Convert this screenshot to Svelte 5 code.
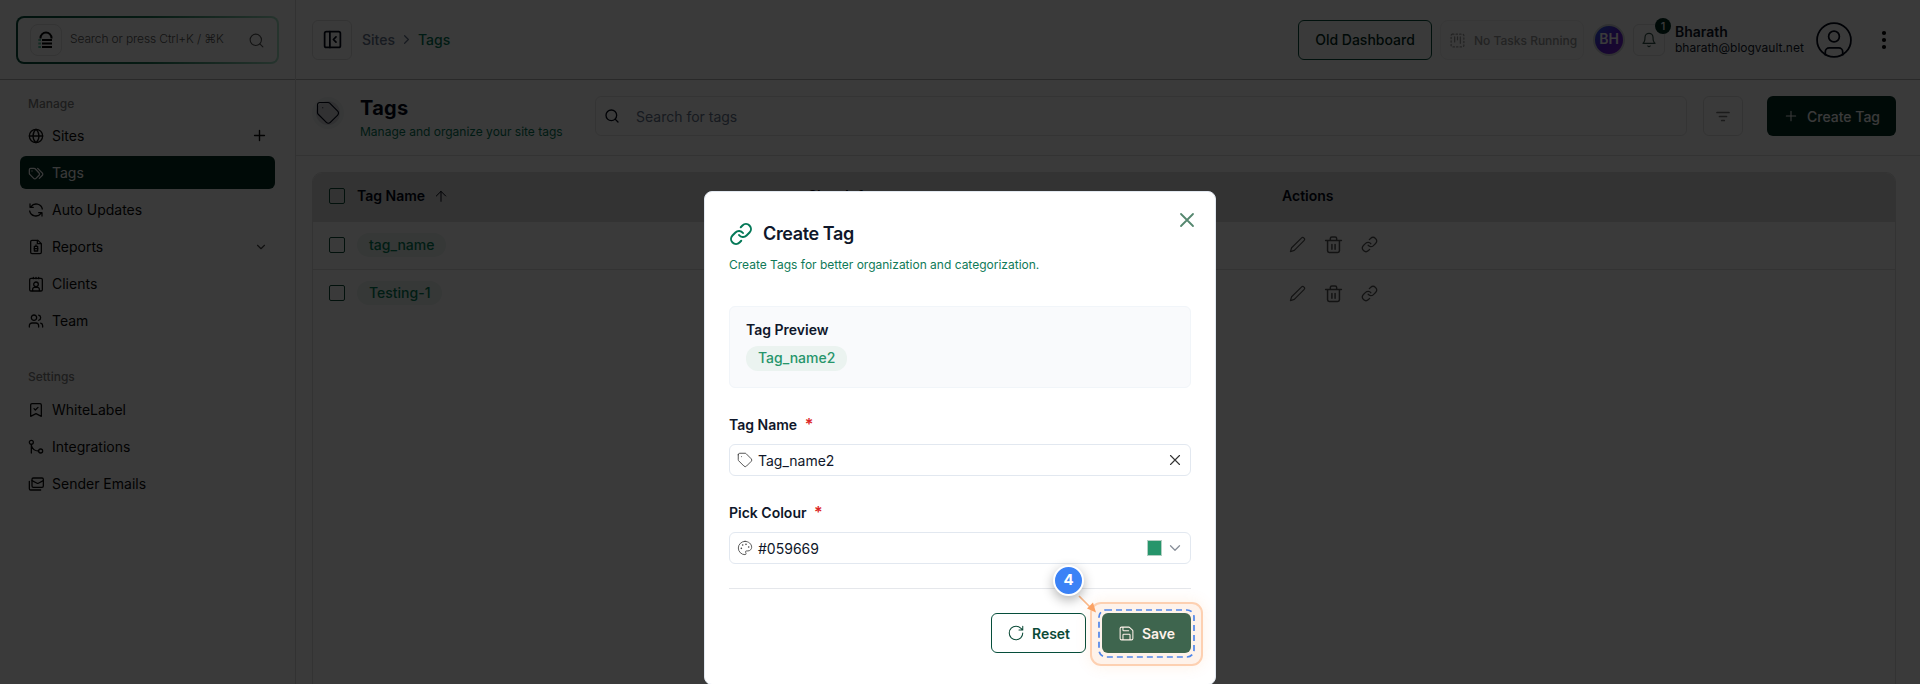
<script>
  const icons = {
    globe: '<circle cx="12" cy="12" r="10"/><path d="M2 12h20M12 2C8.500 5 7.500 8.500 7.500 12s1 7 4.500 10c3.500-3 4.500-6.500 4.500-10S15.500 5 12 2Z"/>',
    tags: '<path d="M2 7v5.500c0 .6.200 1.200.700 1.600l5.900 5.900a2.400 2.400 0 0 0 3.400 0l4.600-4.600a2.400 2.400 0 0 0 0-3.400L10.700 5.700A2.400 2.400 0 0 0 9.100 5H4a2 2 0 0 0-2 2Z"/><path d="m17 20 4.300-4.300a2.700 2.700 0 0 0 0-3.900L14.500 5M6 9h.01"/>',
    sync: '<path d="M21.500 10.500A9.500 9.500 0 0 0 4.500 7M3 3v5h5M2.500 13.500A9.500 9.500 0 0 0 19.500 17m1.500 4v-5h-5"/>',
    report: '<path d="M14 2v5h5"/><path d="M18 22H6a2 2 0 0 1-2-2V4a2 2 0 0 1 2-2h9l5 5v13a2 2 0 0 1-2 2Z"/><path d="M9.500 18v-7h5v7ZM9 14.500h6M12 9v2"/>',
    client: '<rect x="2.500" y="3.500" width="19" height="19" rx="2"/><path d="M8 2v2M12 2v2M16 2v2M7 22v-2a3 3 0 0 1 3-3h4a3 3 0 0 1 3 3v2"/><circle cx="12" cy="12.500" r="3.500"/>',
    team: '<path d="M16 21v-2a4 4 0 0 0-4-4H6a4 4 0 0 0-4 4v2M22 21v-2a4 4 0 0 0-3-3.870M16 3.130a4 4 0 0 1 0 7.750"/><circle cx="9" cy="7" r="4"/>',
    bookmark: '<path d="M20 21.500l-8-4-8 4V4.500a2 2 0 0 1 2-2h12a2 2 0 0 1 2 2ZM9 10l2 2 4-4"/>',
    branch: '<circle cx="5" cy="5" r="3"/><circle cx="19" cy="18" r="3"/><path d="M5 8v13M5 9c1 5.500 5 9 11 9"/>',
    mails: '<rect x="6" y="3" width="17" height="14" rx="2"/><path d="m23 7-7.500 3.800c-.6.300-1.300.3-1.900 0L6 7M2 8v11a2 2 0 0 0 2 2h15"/>',
    search: '<circle cx="11" cy="11" r="8"/><path d="m21 21-4.300-4.300"/>',
    plus: '<path d="M5 12h14M12 5v14"/>',
    down: '<path d="m6 9 6 6 6-6"/>',
    right: '<path d="m9 18 6-6-6-6"/>',
    up: '<path d="m5 12 7-7 7 7M12 20V5"/>',
    panel: '<rect x="3" y="3" width="18" height="18" rx="2"/><path d="M9 3v18M16 15l-3-3 3-3"/>',
    tag: '<path d="M3 5v6.600c0 .5.200 1.100.600 1.500l7 7a2.400 2.400 0 0 0 3.400 0l6.300-6.300a2.400 2.400 0 0 0 0-3.400l-6.800-6.800a2 2 0 0 0-1.400-.6H5a2 2 0 0 0-2 2ZM7.500 7.500h.01"/>',
    task: '<rect x="3" y="3" width="18" height="18" rx="2" stroke-dasharray="2 3"/><path d="M8 7v7M12 7v4M16 7v9"/>',
    bell: '<path d="M6 8a6 6 0 0 1 12 0c0 7 3 9 3 9H3s3-2 3-9M10.300 21a1.940 1.940 0 0 0 3.400 0"/>',
    user: '<circle cx="12" cy="12" r="10.700"/><circle cx="12" cy="9.800" r="3.400"/><path d="M6.500 21.300v-1.800a2.500 2.500 0 0 1 2.500-2.500h6a2.500 2.500 0 0 1 2.500 2.500v1.800"/>',
    pencil: '<path d="M17.500 2.900a2.600 2.600 0 0 1 3.700 3.700L7.500 20.300 2 22l1.700-5.400Z"/>',
    trash: '<path d="M2 7h20M4.500 7v13a2 2 0 0 0 2 2h11a2 2 0 0 0 2-2V7M8 7V4.500a2 2 0 0 1 2-2h4a2 2 0 0 1 2 2V7M10 12v6M14 12v6"/>',
    chain: '<path d="M10 13a5 5 0 0 0 7.540.540l3-3a5 5 0 0 0-7.070-7.070l-1.720 1.710"/><path d="M14 11a5 5 0 0 0-7.540-.540l-3 3a5 5 0 0 0 7.070 7.070l1.710-1.710"/>',
    x: '<path d="M18 6 6 18M6 6l12 12"/>',
    palette: '<path d="M12 2a10 10 0 0 0 0 20c.9 0 1.600-.7 1.600-1.700 0-.4-.2-.8-.4-1.100-.3-.3-.4-.7-.4-1.100a1.600 1.600 0 0 1 1.600-1.700h2c3 0 5.600-2.500 5.600-5.500C22 6 17.500 2 12 2Z"/><path d="M13.500 6.500h.01M17.500 10.500h.01M8.500 7.500h.01M6.500 12.500h.01" stroke-width="2.500"/>',
    reset: '<path d="M21 12a9 9 0 1 1-9-9c2.500 0 4.900 1 6.700 2.700L21 8M21 3v5h-5"/>',
    save: '<path d="M15.200 3a2 2 0 0 1 1.400.6l3.800 3.800a2 2 0 0 1 .6 1.400V19a2 2 0 0 1-2 2H5a2 2 0 0 1-2-2V5a2 2 0 0 1 2-2ZM17 21v-7a1 1 0 0 0-1-1H8a1 1 0 0 0-1 1v7M7 3v4a1 1 0 0 0 1 1h7"/>'
  };
  const groups = [
    { label: 'Manage', items: [
      { name: 'Sites', icon: 'globe', end: 'plus' },
      { name: 'Tags', icon: 'tags', active: true },
      { name: 'Auto Updates', icon: 'sync' },
      { name: 'Reports', icon: 'report', end: 'down' },
      { name: 'Clients', icon: 'client' },
      { name: 'Team', icon: 'team' }
    ] },
    { label: 'Settings', items: [
      { name: 'WhiteLabel', icon: 'bookmark' },
      { name: 'Integrations', icon: 'branch' },
      { name: 'Sender Emails', icon: 'mails' }
    ] }
  ];
  const rows = ['tag_name', 'Testing-1'];
</script>

{#snippet icon(name, size = 16, width = 2)}
  <svg class="icon" width={size} height={size} viewBox="0 0 24 24" fill="none" stroke="currentColor" stroke-width={width} stroke-linecap="round" stroke-linejoin="round">{@html icons[name]}</svg>
{/snippet}

<div class="app">
  <aside>
    <div class="brand">
      <div class="finder">
        <div class="logo">
          <svg width="16" height="18" viewBox="0 0 16 18">
            <path d="M2.500 7.500V7a5.500 5.500 0 0 1 11 0v.5" fill="none" stroke="#000" stroke-width="2" />
            <path d="M4 9h10M4 12.500h10M4 16h10" stroke="#000" stroke-width="2" />
            <path d="M.5 9h2.500M.5 12.500h2.500M.5 16h2.500" stroke="#18a878" stroke-width="2" stroke-dasharray="1.200 .6" />
          </svg>
        </div>
        <span>Search or press Ctrl+K / ⌘K</span>
        {@render icon('search', 17, 1.6)}
      </div>
    </div>
    {#each groups as group}
      <section class="group">
        <h2>{group.label}</h2>
        {#each group.items as item}
          <div class="item" class:active={item.active}>
            {@render icon(item.icon, 16, 1.9)}
            <span>{item.name}</span>
            {#if item.end}<i class:plus={item.end === 'plus'}>{@render icon(item.end, item.end === 'plus' ? 17 : 14, 2)}</i>{/if}
          </div>
        {/each}
      </section>
    {/each}
  </aside>

  <main>
    <header class="top">
      <button class="toggle">{@render icon('panel', 21, 2)}</button>
      <nav><span>Sites</span>{@render icon('right', 15, 2)}<b>Tags</b></nav>
      <button class="old">Old Dashboard</button>
      <div class="tasks">{@render icon('task', 17, 1.7)}<span>No Tasks Running</span></div>
      <div class="initials">BH</div>
      <button class="bell">{@render icon('bell', 16, 1.8)}<em>1</em></button>
      <div class="account"><b>Bharath</b><span>bharath@blogvault.net</span></div>
      <div class="avatar">{@render icon('user', 38, 1.1)}</div>
      <svg class="dots" width="6" height="20" viewBox="0 0 6 20"><circle cx="3" cy="3" r="2.100" /><circle cx="3" cy="10" r="2.100" /><circle cx="3" cy="17" r="2.100" /></svg>
    </header>

    <div class="heading">
      <div class="medal">{@render icon('tag', 28, 1)}</div>
      <div class="title"><h1>Tags</h1><p>Manage and organize your site tags</p></div>
      <div class="query">{@render icon('search', 16, 2)}<span>Search for tags</span></div>
      <button class="filter"><svg width="14" height="11" viewBox="0 0 14 11" stroke="currentColor" stroke-width="1.700" stroke-linecap="round"><path d="M1 1.500h12M3.500 5.500h7M5.700 9.500h2.600" /></svg></button>
      <button class="create">{@render icon('plus', 16, 1.6)}<span>Create Tag</span></button>
    </div>

    <div class="table">
      <div class="row head">
        <span class="box"></span>
        <div class="name"><b>Tag Name</b>{@render icon('up', 16, 1.5)}</div>
        <b class="info">Sites Info</b>
        <b class="acts">Actions</b>
      </div>
      {#each rows as row}
        <div class="row">
          <span class="box"></span>
          <div class="name"><span class="pill">{row}</span></div>
          <span class="info"></span>
          <div class="acts tools">{@render icon('pencil', 17, 1.7)}{@render icon('trash', 19, 1.9)}{@render icon('chain', 17, 1.8)}</div>
        </div>
      {/each}
    </div>
  </main>

  <div class="shade"></div>

  <div class="modal">
    <div class="mtitle">{@render icon('chain', 24, 2)}<h3>Create Tag</h3></div>
    <button class="close">{@render icon('x', 24, 1.8)}</button>
    <p class="desc">Create Tags for better organization and categorization.</p>
    <div class="preview"><b>Tag Preview</b><span class="pill">Tag_name2</span></div>
    <div class="label">Tag Name <em>*</em></div>
    <div class="input">{@render icon('tag', 18, 1.2)}<span>Tag_name2</span><i>{@render icon('x', 18, 1.5)}</i></div>
    <div class="label">Pick Colour <em>*</em></div>
    <div class="input pick">{@render icon('palette', 16, 1.3)}<span>#059669</span><u></u><i class="grey">{@render icon('down', 18, 1.7)}</i></div>
    <div class="foot">
      <button class="reset">{@render icon('reset', 18, 1.4)}<span>Reset</span></button>
      <button class="save">{@render icon('save', 17, 1.5)}<span>Save</span></button>
    </div>
  </div>

  <div class="halo"></div>
  <svg class="dash" width="98" height="50"><rect x="1" y="1" width="95" height="47" rx="7" fill="none" stroke="#4f86ea" stroke-width="1.700" stroke-dasharray="6 4" /></svg>
  <svg class="arrow" width="20" height="20" viewBox="0 0 20 20"><path d="M1 1l11 11" stroke="#fbb98a" stroke-width="1.700" /><path d="M18 17.500 9 13.500l6-6Z" fill="#fba264" /></svg>
  <div class="step">4</div>
</div>

<style>
  :global(body) { overflow: hidden; }
  * { box-sizing: border-box; }
  .app { position: relative; display: flex; width: 1920px; height: 684px; overflow: hidden; background: #fff; color: #020817; font: 400 14px/20px Inter, sans-serif; }
  button { padding: 0; font: inherit; background: none; border: 0; display: flex; align-items: center; justify-content: center; color: inherit; }
  h1, h2, h3, p { margin: 0; }
  em, i { font-style: normal; }
  .icon { flex: none; display: block; }
  b { font-weight: 600; }

  aside { width: 296px; border-right: 1px solid #dcdcdc; flex: none; }
  .brand { height: 80px; padding: 16px 16px 0; border-bottom: 1px solid #b4b4b4; }
  .finder { height: 48px; display: flex; align-items: center; padding: 0 12px; border: 2px solid transparent; border-radius: 8px; background: linear-gradient(#fff, #fff) padding-box, linear-gradient(90deg, #064e3b, #1c7555 50%, #a7e3c8) border-box; color: #555; font-size: 12px; font-weight: 300; letter-spacing: -.13px; }
  .finder span { flex: 1; margin: -3px 0 0 8px; white-space: nowrap; }
  .logo { width: 32px; height: 32px; border: 1px solid #e2e2e2; border-radius: 8px; display: flex; align-items: center; justify-content: center; }
  .group { padding: 14px 20px 0; height: 273px; }
  h2 { font-size: 12px; line-height: 20px; padding-left: 8px; margin-bottom: 6px; font-weight: 500; color: #808080; }
  .group:first-of-type h2 { margin-bottom: 5px; }
  .item { height: 33px; margin-bottom: 4px; display: flex; align-items: center; padding: 0 8px; border-radius: 6px; color: #0a0a0a; }
  .item span { flex: 1; margin-left: 8px; }
  .item i { width: 16px; display: flex; justify-content: center; color: #444; margin-right: -2px; }
  .item i.plus { color: #111; margin-right: 0; }
  .item.active { background: #022c22; color: #fff; }

  main { flex: 1; min-width: 0; }
  .top { height: 80px; display: flex; align-items: center; padding-left: 16px; border-bottom: 1px solid #b4b4b4; }
  .toggle { width: 40px; height: 40px; border: 1px solid #e0e0e0; border-radius: 6px; }
  nav { flex: 1; display: flex; align-items: center; gap: 4px; margin-left: 10px; font-weight: 500; color: #64748b; }
  nav b { color: #047857; font-weight: 500; }
  .old { width: 134px; height: 40px; border: 1px solid #064e3b; border-radius: 6px; font-weight: 500; color: #022c22; }
  .tasks { width: 144px; height: 40px; margin-left: 8px; display: flex; align-items: center; gap: 8px; padding: 2px 0 0 8px; border: 1px solid #efefef; border-radius: 8px; font-size: 12px; font-weight: 500; color: #999; white-space: nowrap; }
  .initials { width: 32px; height: 32px; margin-left: 9px; border: 2px solid #d1d5db; border-radius: 50%; background: linear-gradient(135deg, #2563eb, #5b21d6 50%, #7e22ce); color: #fff; display: flex; align-items: center; justify-content: center; font-weight: 600; padding-bottom: 2px; }
  .bell { position: relative; width: 32px; height: 32px; margin-left: 8px; border: 1px solid #e2e2e2; border-radius: 6px; color: #34544a; }
  .bell em { position: absolute; right: -7px; top: -7px; width: 16px; height: 16px; border-radius: 50%; background: #022c22; color: #fff; font: 500 11px/16px Inter, sans-serif; }
  .account { display: flex; flex-direction: column; margin: -2px 0 0 10px; width: 129px; font-size: 12px; line-height: 15px; color: #0f172a; }
  .account b { font-size: 14px; line-height: 17px; }
  .avatar { margin-left: 11px; width: 38px; }
  .dots { margin: 0 33px 0 28px; }

  .heading { height: 76px; display: flex; align-items: center; padding: 0 24px 3px 16px; border-bottom: 1px solid #dedede; }
  .medal { width: 32px; height: 32px; margin-top: -6px; border-radius: 50%; border: 4px solid #f2f3f4; background: #d5d5dd; display: flex; align-items: center; justify-content: center; }
  .title { width: 251px; padding: 3px 0 0 16px; }
  h1 { font-size: 20px; line-height: 28px; font-weight: 700; letter-spacing: .3px; margin-top: -2px; }
  .title p { font-size: 12px; line-height: 16px; color: #047857; margin-top: 2px; white-space: nowrap; }
  .query { flex: 1; height: 40px; border: 1px solid #e4e4e4; border-radius: 6px; display: flex; align-items: center; gap: 16px; padding: 0 8px; color: #020817; }
  .query span { color: #64748b; padding-top: 2px; }
  .filter { width: 40px; height: 40px; margin: 0 24px 0 16px; border: 1px solid #e0e0e0; border-radius: 6px; color: #777; }
  .create { width: 129px; height: 40px; gap: 8px; border-radius: 6px; background: #022c22; color: #fff; font-weight: 500; }
  .create span { padding-top: 2px; }

  .table { margin: 16px 24px 0 16px; height: 540px; border: 1px solid #dedede; border-radius: 10px; overflow: hidden; }
  .row { height: 48px; display: flex; align-items: center; padding: 0 0 2px 16px; }
  .head + .row { border-bottom: 1px solid #dedede; }
  .row.head { height: 49px; background: #e0e0e0; padding-bottom: 3px; }
  .box { width: 16px; height: 16px; border: 1px solid #0c4a37; border-radius: 2px; flex: none; }
  .name { width: 463px; padding-left: 12px; display: flex; align-items: center; gap: 8px; }
  .info { width: 474px; }
  .pill { display: inline-block; height: 24px; line-height: 23px; padding: 0 12px; border-radius: 12px; background: #ebf3f0; color: #059669; font-weight: 500; }
  .row .pill { color: #04805a; }
  .tools { display: flex; align-items: center; gap: 18px; padding-left: 7px; color: #555; }

  .shade { position: absolute; inset: 0; background: rgba(0, 0, 0, .773); }
  .modal { position: absolute; left: 704px; top: 191px; width: 512px; height: 494px; padding: 29px 24px 0; background: #fff; border: 1px solid #e2e8f0; border-radius: 8px; }
  .mtitle { display: flex; align-items: center; gap: 10px; height: 26px; color: #047857; }
  h3 { font-size: 18px; font-weight: 600; color: #0f172a; line-height: 26px; letter-spacing: -.38px; }
  .close { position: absolute; right: 16px; top: 16px; color: #55876f; }
  .desc { margin-top: 10px; font-size: 12px; line-height: 16px; color: #0f7a58; }
  .preview { margin-top: 33px; height: 82px; padding: 13px 16px; border: 1px solid #f1f5f9; border-radius: 6px; background: #f9fafc; display: flex; flex-direction: column; align-items: flex-start; gap: 6px; color: #0f172a; }
  .modal .pill { color: #26956b; height: 25px; line-height: 24px; }
  .label { margin-top: 26px; height: 20px; font-weight: 600; color: #0f172a; }
  .label em { color: #dc2626; margin-left: 4px; font-size: 16px; }
  .input { margin-top: 10px; height: 32px; border: 1px solid #e2e8f0; border-radius: 6px; display: flex; align-items: center; padding: 0 6px; color: #444; }
  .input span { flex: 1; margin-left: 4px; padding-top: 1px; color: #0f172a; }
  .input i { color: #333; }
  .input i.grey { color: #888f99; }
  .pick { padding-left: 7px; }
  .pick span { margin-left: 5px; }
  .input u { width: 15px; height: 16px; background: #26956b; border: 1px solid #b3cfc3; margin-right: 4px; }
  .foot { margin-top: 24px; padding-top: 24px; border-top: 1px solid #e5e7eb; display: flex; justify-content: flex-end; gap: 16px; }
  .foot button { height: 40px; border-radius: 6px; font-weight: 600; gap: 7px; }
  .foot span { padding-top: 1px; }
  .reset { width: 95px; border: 1px solid #064e3b; color: #0b4a37; }
  .foot .save { width: 89px; background: #2d6554; color: #fff; }
  .halo { position: absolute; left: 1090px; top: 602px; width: 113px; height: 64px; border: 2px solid #fdd0b1; border-radius: 11px; background: rgba(249, 115, 22, .09); box-shadow: 0 0 16px rgba(249, 115, 22, .1); }
  .dash { position: absolute; left: 1098px; top: 609px; }
  .arrow { position: absolute; left: 1078px; top: 595px; }
  .step { position: absolute; left: 1053px; top: 565px; width: 31px; height: 31px; border: 2px solid #fff; border-radius: 50%; background: #3b82f6; color: #fff; text-align: center; font: 700 15px/25px Inter, sans-serif; box-shadow: 0 4px 12px rgba(0, 0, 0, .3); }
</style>
